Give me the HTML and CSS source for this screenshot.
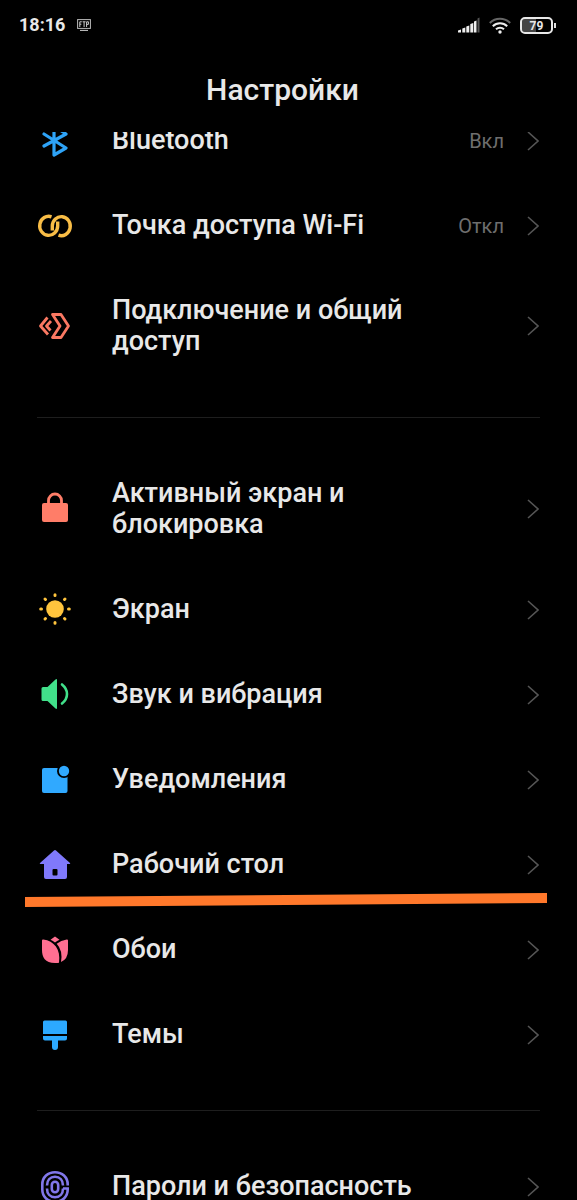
FILE: index.html
```html
<!DOCTYPE html>
<html lang="ru">
<head>
<meta charset="utf-8">
<meta name="viewport" content="width=device-width, initial-scale=1">
<title>Настройки</title>
<link rel="stylesheet" href="styles.css">
</head>
<body>
<svg class="defs" aria-hidden="true">
  <symbol id="chevron" viewBox="0 0 12 22"><path d="M1 2l10 9-10 9" fill="none" stroke="currentColor" stroke-width="1.6"/></symbol>
</svg>
<div class="phone">
  <div class="status">
    <div class="status-group">
      <span class="clock">18:16</span>
      <svg class="ftp" viewBox="0 0 14 12" aria-hidden="true">
        <rect x=".6" y=".6" width="12.8" height="8.8" fill="none" stroke="#bbb"/>
        <path d="M2.8 8V2.8h2M2.8 5.2h1.6M5.6 2.8h3M7.1 2.8V8M9.6 8V2.8h1.8v2.6H9.6M3 11.4h8" fill="none" stroke="#ccc"/>
      </svg>
    </div>
    <div class="status-group status-right">
      <svg class="signal" viewBox="0 0 22 16" aria-hidden="true">
        <path d="M0 15.5v-2l3-1v3zM4.300 15.500v-4l3-1v5zM8.300 15.500V9.500l3-1v7zM12.300 15.500V7l3-1v9.500zM16 15.500V4.500l2.500-1v12z" fill="#eee"/>
        <path d="M19.500 15.500V1.500l2-1v15z" fill="#555"/>
      </svg>
      <svg class="wifi" viewBox="0 0 22 17" aria-hidden="true" fill="none" stroke-width="2">
        <path d="M.8 6a14.500 14.500 0 0 1 20.400 0" stroke="#666"/>
        <path d="M3.800 9.200a10.300 10.300 0 0 1 14.400 0M7 12.300a5.800 5.800 0 0 1 8 0" stroke="#eee"/>
        <circle cx="11" cy="15" r="1.700" fill="#eee"/>
      </svg>
      <span class="battery"><span class="battery-body">79</span></span>
    </div>
  </div>

  <h1 class="title">Настройки</h1>

  <main class="scroll">
    <nav class="list">
      <a class="row" href="#bluetooth">
        <svg class="icon" viewBox="0 0 36 36" fill="none" stroke="#2ea3f7" stroke-width="3.200" stroke-linejoin="round" stroke-linecap="round"><path d="M7 11l22 14-12 7V3l12 8L7 23"/></svg>
        <span class="label">Bluetooth</span><span class="value">Вкл</span>
        <svg class="chevron"><use href="#chevron"/></svg>
      </a>
      <a class="row" href="#hotspot">
        <svg class="icon" viewBox="0 0 36 36" fill="none" stroke="#f9bd46" stroke-width="3.400"><path d="M14.500 8.800A9 9.500 0 1 0 20.700 18V13.500"/><path d="M14.500 8.800A9 9.500 0 1 0 20.700 18V13.500" transform="rotate(180 18 18)"/></svg>
        <span class="label">Точка доступа Wi-Fi</span><span class="value">Откл</span>
        <svg class="chevron"><use href="#chevron"/></svg>
      </a>
      <a class="row" href="#sharing">
        <svg class="icon" viewBox="0 0 36 36" fill="none" stroke="#fa7862" stroke-width="2.800" stroke-linejoin="round"><path d="M15.500 6.500H24l7.500 11.500-7.500 11.500h-8.500l7.500-11.500zM10.500 9.500L3.500 18l7.500 8.500M14 13l-4.500 5 4 4.500"/></svg>
        <span class="label">Подключение и общий доступ</span>
        <svg class="chevron"><use href="#chevron"/></svg>
      </a>
      <hr class="divider">
      <a class="row" href="#lock">
        <svg class="icon" viewBox="0 0 36 36"><rect x="5" y="12" width="26" height="19" rx="2" fill="#ff7d68"/><path d="M11.500 13v-3.500a6.500 6.500 0 0 1 13 0V13" fill="none" stroke="#ff7d68" stroke-width="2.800"/></svg>
        <span class="label">Активный экран и блокировка</span>
        <svg class="chevron"><use href="#chevron"/></svg>
      </a>
      <a class="row" href="#display">
        <svg class="icon" viewBox="0 0 36 36" stroke="#ffc43d" stroke-width="3" stroke-linecap="round"><circle cx="18" cy="17" r="8.800" fill="#ffc43d" stroke="none"/><path d="M18 2.700v.8M18 30.500v.8M3.700 17h.8M31.500 17h.8M8 7l.5.5M27.500 26.500l.5.5M8 27l.5-.5M27.500 7.500l.5-.5"/></svg>
        <span class="label">Экран</span>
        <svg class="chevron"><use href="#chevron"/></svg>
      </a>
      <a class="row" href="#sound">
        <svg class="icon" viewBox="0 0 36 36"><path d="M6 10h4.500L18.500 2.500q1.500-1 1.500.5v28q0 1.500-1.500.5l-8-7.500H6q-1.500 0-1.500-1.500v-11q0-1.500 1.500-1.500z" fill="#41e08a"/><path d="M25 7.500q5 4 5 9.500t-5 9.500" fill="none" stroke="#41e08a" stroke-width="2.600" stroke-linecap="round"/></svg>
        <span class="label">Звук и вибрация</span>
        <svg class="chevron"><use href="#chevron"/></svg>
      </a>
      <a class="row" href="#notifications">
        <svg class="icon" viewBox="0 0 36 36"><rect x="5" y="6" width="25.500" height="25" rx="2" fill="#30a9ff"/><circle cx="27" cy="9" r="7" fill="#000"/><circle cx="27" cy="9" r="5.200" fill="#30a9ff"/></svg>
        <span class="label">Уведомления</span>
        <svg class="chevron"><use href="#chevron"/></svg>
      </a>
      <a class="row" href="#home">
        <svg class="icon" viewBox="0 0 36 36"><path d="M17 3.500q1-.9 2 0L33 16q.8 1-.5 1H30v13q0 2-2 2H9q-2 0-2-2V17H3.500q-1.300 0-.5-1z" fill="#8079fb"/><rect x="15.500" y="22" width="5" height="6.500" rx="1" fill="#000"/></svg>
        <span class="label">Рабочий стол</span>
        <svg class="chevron"><use href="#chevron"/></svg>
        <svg class="marker" viewBox="0 0 522 14" preserveAspectRatio="none" aria-hidden="true"><path d="M0 4L522 0V10L0 14z" fill="#ff782b"/></svg>
      </a>
      <a class="row" href="#wallpaper">
        <svg class="icon" viewBox="0 0 36 36" fill="#ff6f91"><path d="M18 4.500l4.500 3.200Q20 8.800 18 10.500 16 8.800 13.500 7.700z"/><path d="M5 8.500q0-1.200 1.300-1C17 9 24 17 22 30.700q-1 .3-4 .3C8 31 5 25 5 18z"/><path d="M31 8.500q0-1.200-1.300-1Q24 8.500 19.700 11.800 26 18.500 24 30 31 27 31 18z"/></svg>
        <span class="label">Обои</span>
        <svg class="chevron"><use href="#chevron"/></svg>
      </a>
      <a class="row" href="#themes">
        <svg class="icon" viewBox="0 0 36 36" fill="#2ca9ff"><path d="M7.500 3.500h21q1.500 0 1.500 1.500v12H6V5q0-1.500 1.500-1.500zM6 19h24v2.500q0 2-2 2h-7V30a3 3 0 0 1-6 0v-6.500H8q-2 0-2-2z"/></svg>
        <span class="label">Темы</span>
        <svg class="chevron"><use href="#chevron"/></svg>
      </a>
      <hr class="divider">
      <a class="row" href="#security">
        <svg class="icon" viewBox="0 0 36 36" fill="none" stroke="#8177ea" stroke-width="2.600"><path d="M30.700 16.500V15.500C30.700 8 25 3.200 18 3.200S5.300 8 5.300 15.500v5C5.300 28 11 32.800 18 32.800s12.700-4.800 12.700-12.300v-1H26"/><path d="M10 16.500c0-5.500 3.300-8.800 8-8.800s8 3.300 8 8.800M26 19.500c0 5.500-3.300 8.800-8 8.800s-8-3.300-8-8.800"/><rect x="14.800" y="12.800" width="6.400" height="10.400" rx="3.200"/></svg>
        <span class="label">Пароли и безопасность</span>
        <svg class="chevron"><use href="#chevron"/></svg>
      </a>
    </nav>
  </main>
</div>
</body>
</html>
```
FILE: styles.css
```css
* {
  box-sizing: border-box;
}

body {
  margin: 0;
  background: #000;
  color: #e8e8e8;
  font-family: Roboto, "Noto Sans", sans-serif;
}

.defs {
  display: none;
}

.phone {
  display: flex;
  flex-direction: column;
  height: 100vh;
  overflow: hidden;
}

.status {
  display: flex;
  justify-content: space-between;
  align-items: center;
  height: 50px;
  padding: 0 21px 0 19px;
}

.status-group {
  display: flex;
  align-items: center;
  gap: 12px;
}

.status-right {
  gap: 9px;
}

.clock {
  font-size: 18px;
  font-weight: 700;
  line-height: 24px;
}

.ftp {
  width: 14px;
  height: 12px;
}

.signal {
  width: 22px;
  height: 16px;
}

.wifi {
  width: 22px;
  height: 17px;
}

.battery {
  display: flex;
  align-items: center;
}

.battery::after {
  content: "";
  width: 2px;
  height: 5px;
  margin-left: 1px;
  background: #ddd;
}

.battery-body {
  width: 33px;
  height: 17px;
  border: 2px solid #e8e8e8;
  border-radius: 5px;
  background: linear-gradient(90deg, #444 50%, #000 50%);
  background-clip: padding-box;
  font-size: 12px;
  font-weight: 700;
  line-height: 14px;
  text-align: center;
}

.title {
  margin: 0;
  padding: 22px 12px 24px 0;
  font-size: 30px;
  font-weight: 500;
  line-height: 36px;
  text-align: center;
}

.scroll {
  flex: 1;
  min-height: 0;
  overflow: hidden;
}

.list {
  margin-top: -34px;
}

.row {
  position: relative;
  display: flex;
  align-items: center;
  padding: 27px 38px 27px 37px;
  color: inherit;
  text-decoration: none;
}

.icon {
  flex: none;
  width: 36px;
  height: 36px;
  margin: -3px 39px -3px 0;
}

.label {
  flex: 1;
  padding-right: 48px;
  font-size: 27px;
  font-weight: 500;
  line-height: 31px;
}

.value {
  margin-right: 23px;
  color: #6e6e6e;
  font-size: 20px;
  line-height: 24px;
}

.chevron {
  flex: none;
  width: 12px;
  height: 22px;
  color: #555;
}

.divider {
  height: 1px;
  margin: 33px 37px;
  border: 0;
  background: #1e1e1e;
}

.marker {
  position: absolute;
  bottom: 0;
  left: 25px;
  width: calc(100% - 55px);
  height: 14px;
}
```
